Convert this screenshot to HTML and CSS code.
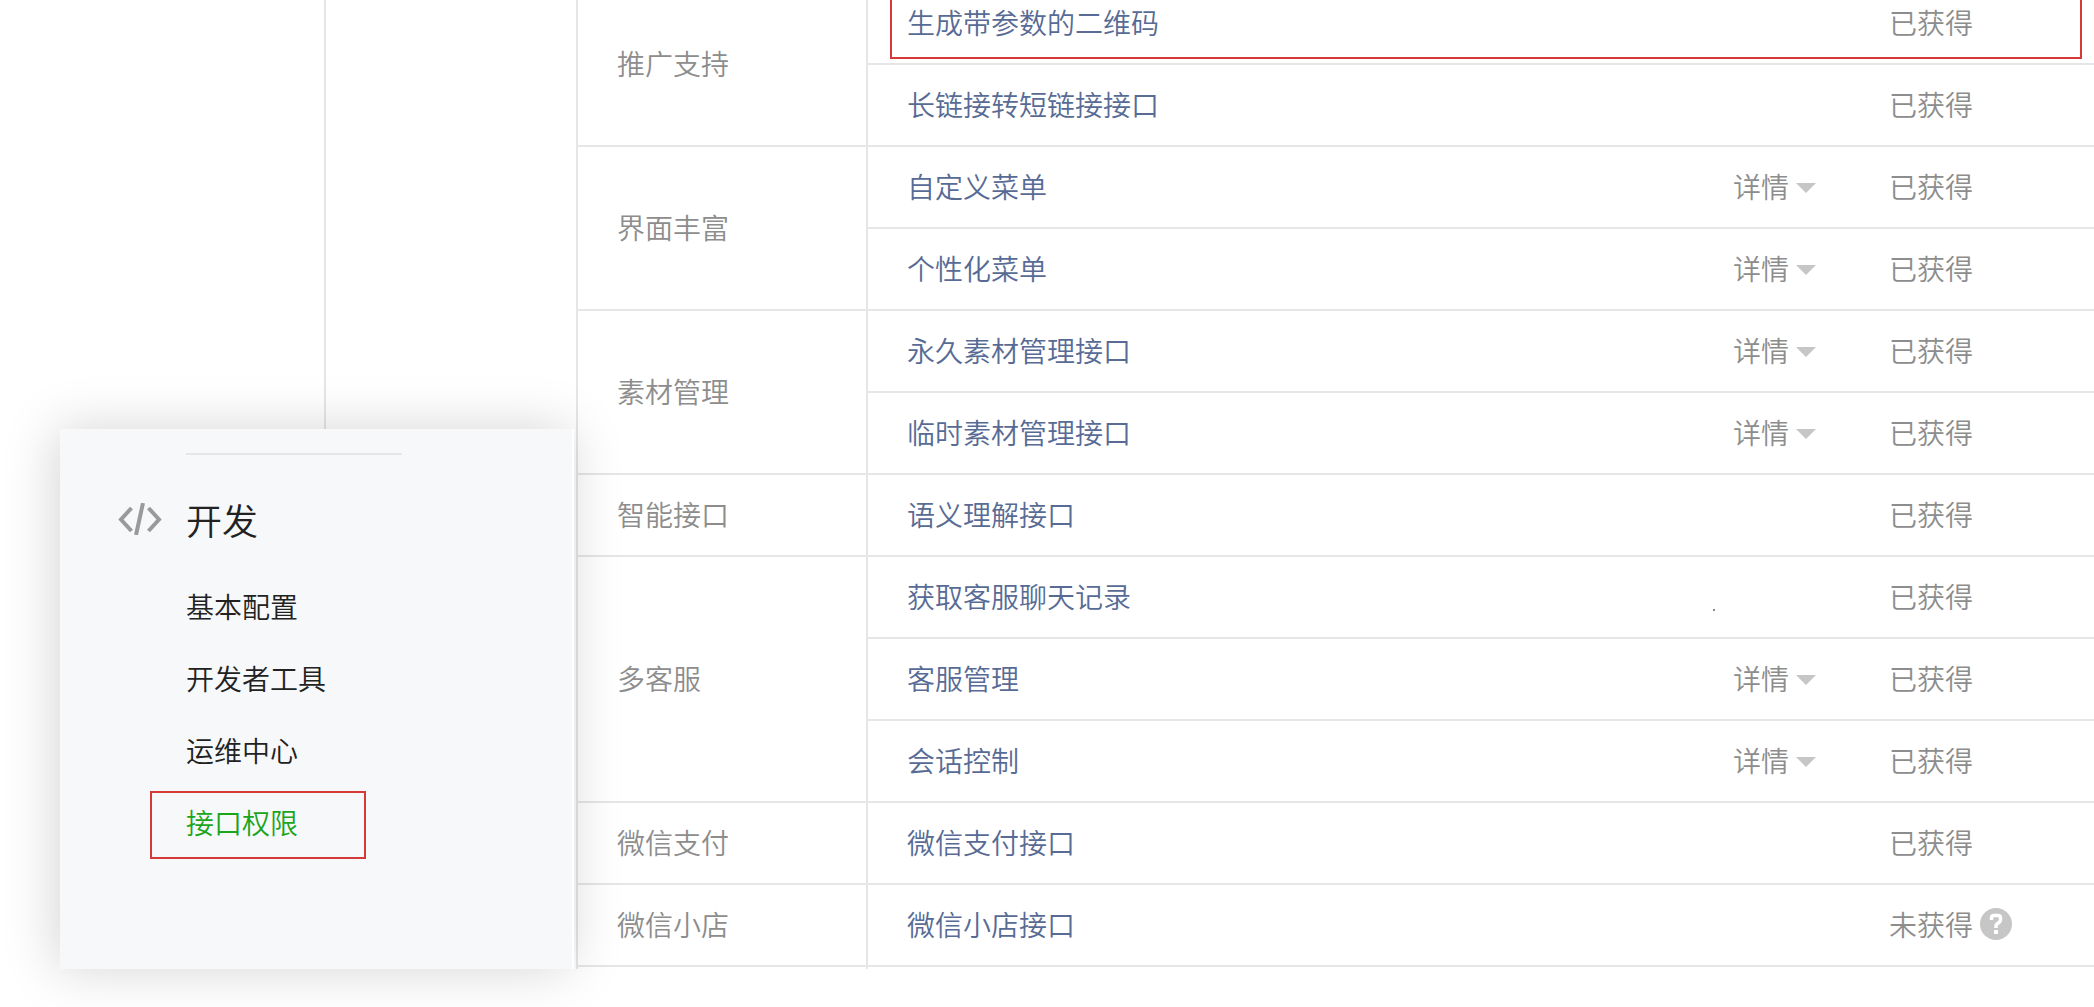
FILE: index.html
```html
<!DOCTYPE html>
<html lang="zh-CN">
<head>
    <meta charset="UTF-8">
    <meta name="viewport" content="width=device-width, initial-scale=1.0">
    <title>接口权限</title>
    <link rel="stylesheet" href="styles.css">
</head>
<body>
    <div class="page">
        <aside class="sidebar"></aside>

        <main class="content">
            <table class="api-table">
                <colgroup>
                    <col class="col-category">
                    <col>
                    <col class="col-detail">
                    <col class="col-status">
                </colgroup>
                <tbody>
                    <tr class="marked">
                        <td class="category" rowspan="2">推广支持</td>
                        <td class="name"><a href="#">生成带参数的二维码</a><span class="mark"></span></td>
                        <td class="detail"></td>
                        <td class="status">已获得</td>
                    </tr>
                    <tr>
                        <td class="name"><a href="#">长链接转短链接接口</a></td>
                        <td class="detail"></td>
                        <td class="status">已获得</td>
                    </tr>
                    <tr>
                        <td class="category" rowspan="2">界面丰富</td>
                        <td class="name"><a href="#">自定义菜单</a></td>
                        <td class="detail"><button type="button">详情</button></td>
                        <td class="status">已获得</td>
                    </tr>
                    <tr>
                        <td class="name"><a href="#">个性化菜单</a></td>
                        <td class="detail"><button type="button">详情</button></td>
                        <td class="status">已获得</td>
                    </tr>
                    <tr>
                        <td class="category" rowspan="2">素材管理</td>
                        <td class="name"><a href="#">永久素材管理接口</a></td>
                        <td class="detail"><button type="button">详情</button></td>
                        <td class="status">已获得</td>
                    </tr>
                    <tr>
                        <td class="name"><a href="#">临时素材管理接口</a></td>
                        <td class="detail"><button type="button">详情</button></td>
                        <td class="status">已获得</td>
                    </tr>
                    <tr>
                        <td class="category">智能接口</td>
                        <td class="name"><a href="#">语义理解接口</a></td>
                        <td class="detail"></td>
                        <td class="status">已获得</td>
                    </tr>
                    <tr>
                        <td class="category" rowspan="3">多客服</td>
                        <td class="name"><a href="#">获取客服聊天记录</a></td>
                        <td class="detail"><span class="dot"></span></td>
                        <td class="status">已获得</td>
                    </tr>
                    <tr>
                        <td class="name"><a href="#">客服管理</a></td>
                        <td class="detail"><button type="button">详情</button></td>
                        <td class="status">已获得</td>
                    </tr>
                    <tr>
                        <td class="name"><a href="#">会话控制</a></td>
                        <td class="detail"><button type="button">详情</button></td>
                        <td class="status">已获得</td>
                    </tr>
                    <tr>
                        <td class="category">微信支付</td>
                        <td class="name"><a href="#">微信支付接口</a></td>
                        <td class="detail"></td>
                        <td class="status">已获得</td>
                    </tr>
                    <tr>
                        <td class="category">微信小店</td>
                        <td class="name"><a href="#">微信小店接口</a></td>
                        <td class="detail"></td>
                        <td class="status">
                            <div class="status-help">
                                未获得
                                <svg width="32" height="32" viewBox="0 0 32 32" role="img" aria-label="帮助">
                                    <circle cx="16" cy="16" r="16" fill="#c6c6c6"/>
                                    <path d="M11.500 12V10Q11.500 7.500 14 7.500H18Q20.500 7.500 20.500 10V12Q20.500 13.500 19 14.500L17.500 15.500Q16 16.500 16 18V20" fill="none" stroke="#fff" stroke-width="3.500"/>
                                    <rect x="14" y="22" width="4" height="4" fill="#fff"/>
                                </svg>
                            </div>
                        </td>
                    </tr>
                </tbody>
            </table>
            <div class="table-end"></div>
        </main>

        <!-- Floating menu -->
        <nav class="menu-card">
            <h2>
                <svg class="code-icon" width="44" height="32" viewBox="0 0 44 32" fill="none" stroke="#9a9a9a" stroke-width="4" aria-hidden="true">
                    <path d="M13.500 5L3 16.500L13.500 28M30.500 5L41 16.500L30.500 28M25 0L18 32"/>
                </svg>
                开发
            </h2>
            <ul>
                <li><a href="#">基本配置</a></li>
                <li><a href="#">开发者工具</a></li>
                <li><a href="#">运维中心</a></li>
                <li><a href="#" class="active">接口权限</a></li>
            </ul>
        </nav>
    </div>
</body>
</html>
```

FILE: styles.css
```css
*,
*::before,
*::after {
    box-sizing: border-box;
    margin: 0;
    padding: 0;
}

body {
    min-height: 100vh;
    font-family: "Noto Sans CJK SC", sans-serif;
    font-size: 28px;
    font-weight: 350;
    line-height: 40px;
    color: #8d8d8d;
    background: #fff;
    overflow: hidden;
}

a {
    color: #576b95;
    text-decoration: none;
}

.page {
    position: relative;
    display: flex;
}

.sidebar {
    width: 326px;
    border-right: 2px solid #e6e6e8;
}

.content {
    flex: 1;
    margin-left: 250px;
    border-left: 2px solid #e6e6e8;
}

/* list is scrolled, first row is cut by the window */
.api-table {
    width: 100%;
    margin-top: -17px;
    table-layout: fixed;
    border-collapse: separate;
    border-spacing: 0;
}

.col-category {
    width: 290px;
}

.col-detail {
    width: 176px;
}

.col-status {
    width: 205px;
}

.api-table td {
    height: 82px;
    padding-bottom: 2px;
    border-bottom: 2px solid #e6e6e8;
    vertical-align: middle;
}

.api-table .category {
    padding-left: 39px;
    border-right: 2px solid #e6e6e8;
}

.api-table .name {
    padding-left: 39px;
}

.api-table .detail {
    position: relative;
    padding-left: 20px;
}

.table-end {
    width: 290px;
    height: 2px;
    border-right: 2px solid #e6e6e8;
}

.detail button {
    display: flex;
    align-items: center;
    gap: 7px;
    font: inherit;
    color: inherit;
    background: none;
    border: none;
    cursor: pointer;
}

.detail button::after {
    content: "";
    margin-top: 3px;
    border: 10px solid transparent;
    border-top-color: #c6c6c6;
    border-bottom: none;
}

.dot {
    position: absolute;
    left: 0;
    top: 52px;
    width: 2px;
    height: 2px;
    background: #888;
}

.status-help {
    display: flex;
    align-items: center;
    gap: 7px;
}

.marked {
    position: relative;
}

.mark {
    position: absolute;
    left: 312px;
    right: 12px;
    top: 6px;
    bottom: 6px;
    border: 2px solid #d63a38;
    pointer-events: none;
}

.menu-card {
    position: absolute;
    left: 60px;
    top: 429px;
    width: 514px;
    height: 540px;
    padding: 24px 126px;
    background: #f7f8fa;
    border-right: 2px solid #fff;
    box-shadow: -4px 0 50px rgba(0, 0, 0, 0.17);
}

.menu-card h2 {
    display: flex;
    align-items: center;
    gap: 24px;
    width: 216px;
    height: 117px;
    padding-top: 12px;
    border-top: 2px solid #e6e6e8;
    font-size: 36px;
    font-weight: 350;
    color: #222;
}

.code-icon {
    flex: none;
    margin-left: -68px;
}

.menu-card ul {
    list-style: none;
}

.menu-card li {
    line-height: 72px;
}

.menu-card a {
    position: relative;
    display: block;
    color: #222;
}

.menu-card .active {
    color: #1aa51a;
}

.menu-card .active::after {
    content: "";
    position: absolute;
    left: -36px;
    top: 5px;
    width: 216px;
    height: 68px;
    border: 2px solid #d63a38;
}
```
